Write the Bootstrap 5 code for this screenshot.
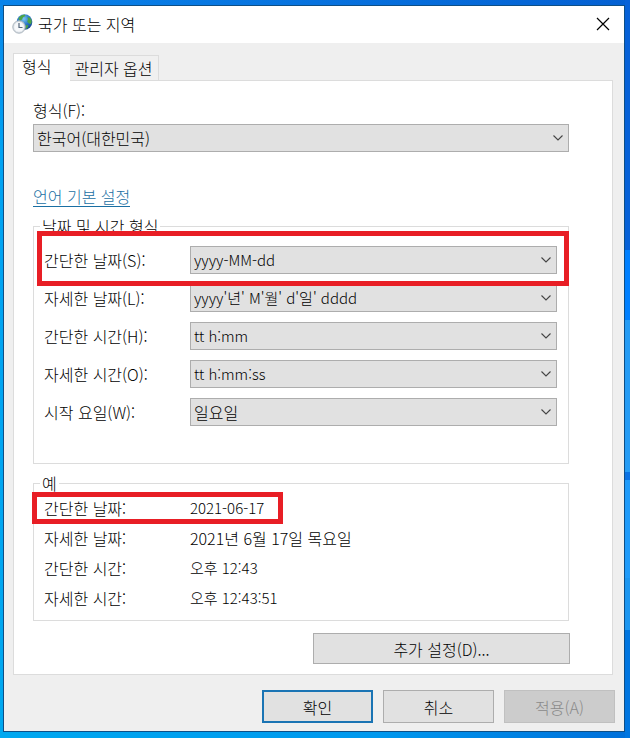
<!DOCTYPE html>
<html lang="ko">
<head>
<meta charset="utf-8">
<meta name="viewport" content="width=device-width, initial-scale=1">
<title>국가 또는 지역</title>
<link href="https://cdn.jsdelivr.net/npm/bootstrap@5.3.0/dist/css/bootstrap.min.css" rel="stylesheet">
<style>
  body {
    --face: #e1e1e1;
    --edge: #adadad;
    --line: #dcdcdc;
    padding: 5px 5px 6px 3px;
    font: 300 16px/20px "Noto Sans CJK KR", "Noto Sans", sans-serif;
    color: #000;
    background:
      linear-gradient(#0762d8 0 250px, #0080ff 250px 320px, #259cf5 320px 472px, #0a72e4 472px 480px, #1f9bfa 480px 578px, #1c96f0 578px 630px, #0076e0 630px) right / 5px 100% no-repeat,
      linear-gradient(90deg, #0a84ea, #0460d2) top / 100% 5px no-repeat,
      linear-gradient(90deg, #00a8f0, #0098ee 60%, #006fda) bottom / 100% 6px no-repeat,
      linear-gradient(#0b86e8, #00a2f2 20%, #00a8f0);
  }
  .dialog { background: #efefef; border: 1px solid #0e4f86; }
  .titlebar { height: 37px; padding: 0 14px 2px 8px; gap: 5px; }
  .titlebar h1 { font: inherit; }
  .close-x { width: 14px; height: 14px; }
  .sheet { margin: 10px 11px 0 9px; }
  .nav-tabs { --bs-nav-tabs-border-width: 0; }
  .nav-tabs .nav-link {
    height: 25px; padding: 0 5px 0 4px; color: #000; line-height: 24px;
    background: #f0f0f0; border: 1px solid var(--line); border-bottom: 0; border-left: 0; border-radius: 0; margin: 0;
  }
  .nav-tabs .nav-link.active {
    height: 28px; padding: 0 19px 3px 8px; margin-bottom: -1px; color: #000; background: #fff;
    border: 1px solid var(--line); border-bottom: 0; border-right: 0; z-index: 1; position: relative;
  }
  .panel { border: 1px solid var(--line); padding: 19px 42px 10px 19px; }
  .form-select {
    height: 28px; padding: 0 24px 0 3px; color: #000; font: inherit; line-height: 26px;
    border: 1px solid var(--edge); border-radius: 0;
    background: var(--face) url("data:image/svg+xml,%3Csvg xmlns='http://www.w3.org/2000/svg' viewBox='0 0 10 6'%3E%3Cpath d='M.5.5 5 5 9.5.5' fill='none' stroke='%23444' stroke-width='1.1'/%3E%3C/svg%3E") right 5px center / 10px 6px no-repeat;
  }
  .form-select.latin, .latin { font-size: 15px; }
  .locale-field { margin-right: 1px; }
  .lang-link { color: #1a6fa3; text-decoration: none; border-bottom: 1px solid #1a6fa3; margin-top: 34px; }
  fieldset { border: 1px solid var(--line); margin-right: 1px; position: relative; }
  legend { font-size: 16px; line-height: 20px; margin: 0 0 0 6px; padding: 0 2px; }
  .formats { margin-top: 9px; padding: 0 11px 37px 0; }
  .formats-grid { padding: 10px 0 0 10px; row-gap: 10px; }
  .samples { margin-top: 9px; padding-bottom: 7px; }
  .samples dl { padding-left: 10px; line-height: 30px; }
  .pair { display: grid; grid-template-columns: 146px minmax(0, 1fr); align-items: center; }
  .samples dt { font-weight: inherit; }
  .highlight { position: absolute; border: 5px solid #e81e25; pointer-events: none; }
  .highlight-format { top: -5px; left: 3px; right: -1px; height: 55px; }
  .highlight-sample { top: -1px; left: -2px; width: 251px; height: 32px; }
  .push {
    height: 33px; width: 111px; padding: 0; font: inherit; color: #000; background: var(--face);
    border: 1px solid var(--edge); border-radius: 0;
  }
  .push-wide { width: 257px; height: 31px; margin-top: 12px; }
  .push-default { border: 2px solid #1a74b4; }
  .push:disabled { color: #8a8a8a; background: #ccc; border-color: #c0c0c0; opacity: 1; }
  .actions { padding: 15px 9px 7px; gap: 10px; }
</style>
</head>
<body class="min-vh-100 d-flex flex-column">
<main class="dialog flex-grow-1">
  <header class="titlebar d-flex align-items-center bg-white">
    <svg width="21" height="22" viewBox="0 0 21 22" aria-hidden="true">
      <defs>
        <radialGradient id="sea" cx=".45" cy=".3" r=".75"><stop offset="0" stop-color="#7cc8f2"/><stop offset=".5" stop-color="#2a78c8"/><stop offset="1" stop-color="#123a86"/></radialGradient>
      </defs>
      <circle cx="12.500" cy="9" r="7.800" fill="url(#sea)"/>
      <path d="M6.500 5q2.500-3.200 6-3.400l1 1.400-2.500 1.200-1 2.300-2.500 1.500zM15.500 4l2.800 1 1.500 3.200-.8 2.800-2-.5-1.800-2 .8-2zM14 12l2.500.5-1.500 3-1.500.5z" fill="#4fa545"/>
      <circle cx="7" cy="14" r="6.200" fill="#e0e5ea" stroke="#a9b3bc"/>
      <circle cx="7" cy="14" r="4.700" fill="#f6f8fa"/>
      <path d="M7 10v4.500h3.500" fill="none" stroke="#54677c" stroke-width="1.200"/>
    </svg>
    <h1 class="m-0">국가 또는 지역</h1>
    <button type="button" class="btn border-0 p-0 ms-auto d-flex" aria-label="닫기">
      <svg class="close-x" viewBox="0 0 14 14" aria-hidden="true"><path d="m1 1 12 12M13 1 1 13" stroke="#000" stroke-width="1.200"/></svg>
    </button>
  </header>

  <div class="sheet">
    <div class="nav nav-tabs align-items-end" role="tablist">
      <button type="button" class="nav-link active" role="tab" aria-selected="true">형식</button>
      <button type="button" class="nav-link" role="tab" aria-selected="false">관리자 옵션</button>
    </div>
    <section class="panel bg-white d-flex flex-column">
      <label for="locale">형식(F):</label>
      <div class="locale-field">
        <select id="locale" class="form-select mt-1"><option>한국어(대한민국)</option></select>
      </div>
      <a href="#" class="lang-link align-self-start">언어 기본 설정</a>

      <fieldset class="formats">
        <legend class="float-none w-auto">날짜 및 시간 형식</legend>
        <div class="formats-grid d-grid">
          <div class="pair"><label for="sd">간단한 날짜(S):</label><select id="sd" class="form-select latin"><option>yyyy-MM-dd</option></select></div>
          <div class="pair"><label for="ld">자세한 날짜(L):</label><select id="ld" class="form-select latin"><option>yyyy'년' M'월' d'일' dddd</option></select></div>
          <div class="pair"><label for="st">간단한 시간(H):</label><select id="st" class="form-select latin"><option>tt h:mm</option></select></div>
          <div class="pair"><label for="lt">자세한 시간(O):</label><select id="lt" class="form-select latin"><option>tt h:mm:ss</option></select></div>
          <div class="pair"><label for="wd">시작 요일(W):</label><select id="wd" class="form-select"><option>일요일</option></select></div>
        </div>
        <div class="highlight highlight-format"></div>
      </fieldset>

      <fieldset class="samples">
        <legend class="float-none w-auto">예</legend>
        <dl class="m-0">
          <div class="pair"><dt>간단한 날짜:</dt><dd class="m-0 latin">2021-06-17</dd></div>
          <div class="pair"><dt>자세한 날짜:</dt><dd class="m-0">2021년 6월 17일 목요일</dd></div>
          <div class="pair"><dt>간단한 시간:</dt><dd class="m-0 latin">오후 12:43</dd></div>
          <div class="pair"><dt>자세한 시간:</dt><dd class="m-0 latin">오후 12:43:51</dd></div>
        </dl>
        <div class="highlight highlight-sample"></div>
      </fieldset>

      <button type="button" class="btn push push-wide align-self-end">추가 설정(D)...</button>
    </section>
  </div>

  <footer class="actions d-flex justify-content-end">
    <button type="submit" class="btn push push-default">확인</button>
    <button type="button" class="btn push">취소</button>
    <button type="button" class="btn push" disabled>적용(A)</button>
  </footer>
</main>
<script src="https://cdn.jsdelivr.net/npm/bootstrap@5.3.0/dist/js/bootstrap.bundle.min.js"></script>
</body>
</html>
